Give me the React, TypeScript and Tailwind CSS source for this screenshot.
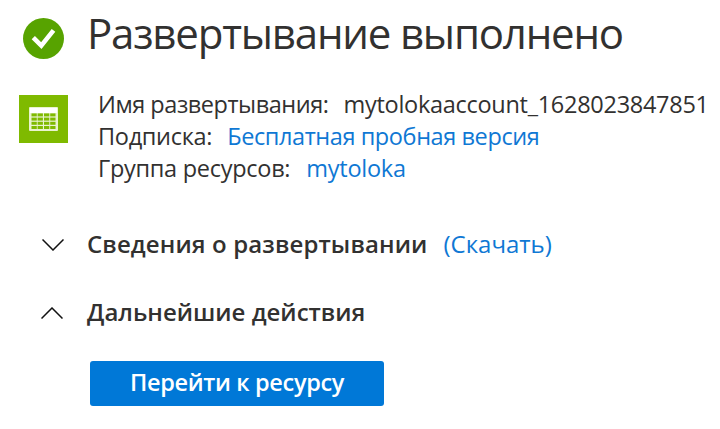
import React from "react";

const Check = () => (
  <svg width="41" height="41" viewBox="0 0 41 41" className="shrink-0">
    <circle cx="20.5" cy="20.5" r="20.5" fill="#57a300" />
    <path d="M10.3 19.6 L18.3 27.6 L30.5 12.4" fill="none" stroke="#fff" strokeWidth="4.6" />
  </svg>
);

const rows = [18.4, 22.6, 26.8, 31];
const cols = [12.5, 18.6, 25, 31.2];

const Table = () => (
  <svg width="49" height="48" viewBox="0 0 49 48" className="shrink-0">
    <rect width="49" height="48" fill="#7fba00" />
    <rect x="10" y="12" width="29" height="24" rx="1" fill="#e9f3cf" />
    <rect x="11" y="13" width="27" height="5" fill="#fff" />
    {rows.map((y) =>
      cols.map((x) => <rect key={`${x}-${y}`} x={x} y={y} width="5.3" height="3" fill="#7fba00" />)
    )}
  </svg>
);

const Chevron = ({ up = false }: { up?: boolean }) => (
  <svg width="22" height="12" viewBox="0 0 22 12" className="shrink-0">
    <path d={up ? "M0.5 11.5 L11 1 L21.5 11.5" : "M0.5 0.5 L11 11 L21.5 0.5"} fill="none" stroke="#111" strokeWidth="1.5" />
  </svg>
);

export default function App() {
  return (
    <main className="h-[429px] w-[720px] overflow-hidden bg-white font-['Open_Sans','Noto_Sans',sans-serif] whitespace-nowrap text-[#323130]">
      <header className="flex h-[76px] items-center pl-[23px]">
        <Check />
        <h1 className="ml-[23px] pb-[10px] text-[42px] leading-[60px] tracking-[-1.19px]"><span>Развертывание выполнено</span></h1>
      </header>
      <section className="flex pt-[12px] pl-[19px]">
        <div className="pt-[7px]"><Table /></div>
        <div className="ml-[30px] text-[23.5px] leading-[32px]">
          <div className="flex gap-[15px]"><span className="tracking-[-0.46px]">Имя развертывания:</span><span className="tracking-[-0.28px]">mytolokaaccount_1628023847851</span></div>
          <div className="flex gap-[15px]"><span className="tracking-[-0.3px]">Подписка:</span><a className="tracking-[-0.41px] text-[#0f78d4]">Бесплатная пробная версия</a></div>
          <div className="flex gap-[16px]"><span className="tracking-[-0.28px]">Группа ресурсов:</span><a className="tracking-[-0.25px] text-[#0f78d4]">mytoloka</a></div>
        </div>
      </section>
      <section className="mt-[45px] flex h-[32px] items-center pl-[42px] text-[24px] leading-[32px]">
        <Chevron />
        <h2 className="ml-[23px] pb-[2px] font-semibold tracking-[0.12px]"><span>Сведения о развертывании</span></h2>
        <a className="ml-[16px] pb-[2px] text-[#0f78d4]">(Скачать)</a>
      </section>
      <section className="mt-[36px] flex h-[32px] items-center pl-[41px] text-[24px] leading-[32px]">
        <Chevron up />
        <h2 className="ml-[24px] pb-[2px] font-semibold"><span>Дальнейшие действия</span></h2>
      </section>
      <button className="mt-[32px] ml-[90px] flex h-[45px] w-[294px] items-center justify-center rounded-[3px] bg-[#0078d7] pb-[2px] text-[23.5px] font-semibold tracking-[-0.34px] text-white"><span>Перейти к ресурсу</span></button>
    </main>
  );
}
